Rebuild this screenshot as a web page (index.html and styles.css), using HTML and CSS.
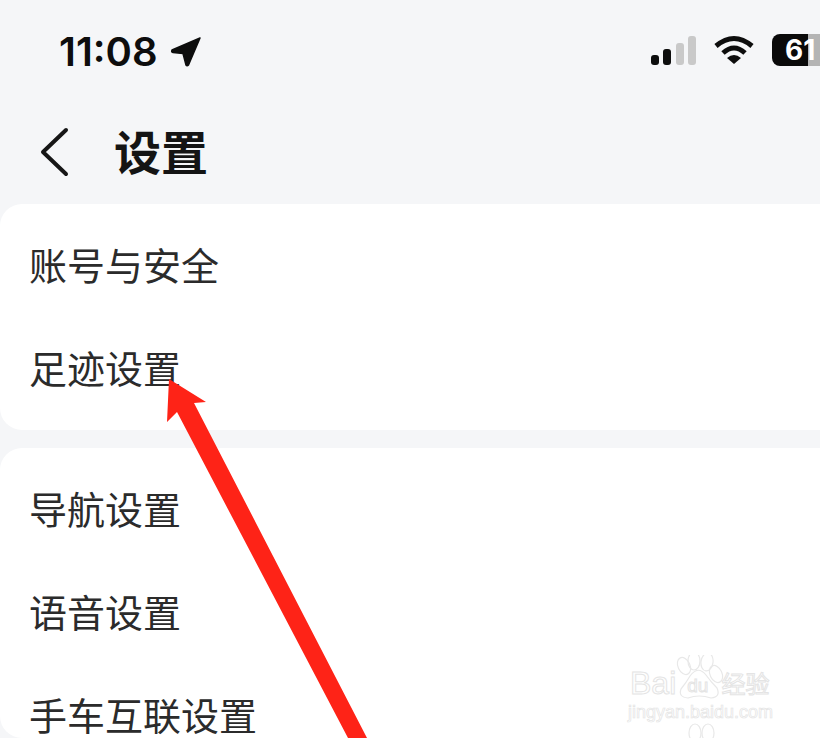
FILE: index.html
```html
<!DOCTYPE html>
<html lang="zh-CN">
<head>
    <meta charset="UTF-8" />
    <title>设置</title>
    <link rel="stylesheet" href="styles.css">
</head>
<body>
    <div class="status-bar">
        <div class="status-time">
            <span>11:08</span>
            <svg class="location-icon" width="32" height="32" viewBox="0 0 32 32">
                <path d="M30 2 L2 14 Q1 16 3 16.5 L13 17.5 L16 29 Q17 30.5 18.5 29 Z" fill="#0d0d0d" stroke="#0d0d0d" stroke-width="1.5" stroke-linejoin="round"/>
            </svg>
        </div>
        <div class="status-icons">
            <div class="signal">
                <span class="bar bar-1"></span>
                <span class="bar bar-2"></span>
                <span class="bar bar-3"></span>
                <span class="bar bar-4"></span>
            </div>
            <svg class="wifi-icon" width="42" height="30" viewBox="0 0 42 30">
                <path d="M3 11 Q21 -4 39 11" fill="none" stroke="#0d0d0d" stroke-width="5"/>
                <path d="M10 18 Q21 8 32 18" fill="none" stroke="#0d0d0d" stroke-width="5"/>
                <path d="M14 23 Q21 17 28 23 L21 29 Z" fill="#0d0d0d"/>
            </svg>
            <div class="battery">61</div>
        </div>
    </div>

    <header class="nav">
        <svg class="back-icon" width="30" height="50" viewBox="0 0 30 50">
            <path d="M26 3 L3 25 L26 47" fill="none" stroke="#161616" stroke-width="4" stroke-linecap="round" stroke-linejoin="round"/>
        </svg>
        <h1 class="nav-title">设置</h1>
    </header>

    <section class="card card-first">
        <div class="row">账号与安全</div>
        <div class="row">足迹设置</div>
    </section>
    <section class="card card-last">
        <div class="row">导航设置</div>
        <div class="row">语音设置</div>
        <div class="row">手车互联设置</div>
    </section>

    <!-- red arrow drawn on top of the screenshot -->
    <svg class="arrow" width="820" height="738" viewBox="0 0 820 738">
        <polygon points="169,379 206,402 194,403 367,738 348,738 177,412 167,422" fill="#fe2317"/>
    </svg>

    <div class="watermark">
        <svg class="paw" width="150" height="83" viewBox="0 0 150 83">
            <g fill="none" stroke="#e8e8e8" stroke-width="1.2">
                <ellipse cx="56" cy="11" rx="6" ry="9" transform="rotate(-25 56 11)"/>
                <ellipse cx="66" cy="6" rx="6" ry="9"/>
                <ellipse cx="79" cy="7" rx="6" ry="9" transform="rotate(8 79 7)"/>
                <ellipse cx="88" cy="19" rx="6" ry="9" transform="rotate(-25 88 19)"/>
                <path d="M53 34 Q58 28 62 21 Q70 10 78 20 Q83 27 89 33 Q93 42 83 43 Q71 39 60 43 Q50 42 53 34 Z"/>
                <ellipse cx="67" cy="78" rx="6" ry="9"/>
                <ellipse cx="80" cy="78" rx="6" ry="9"/>
            </g>
        </svg>
        <div class="wm-logo">
            <span class="wm-bai">Bai</span>
            <span class="wm-du">du</span>
            <span class="wm-cn">经验</span>
        </div>
        <div class="wm-url">jingyan.baidu.com</div>
    </div>
</body>
</html>
```

FILE: styles.css
```css
html, body {
    margin: 0;
    padding: 0;
    width: 820px;
    height: 738px;
    overflow: hidden;
}
body {
    position: relative;
    background: #f5f6f8;
    color: #222;
    font-family: "Noto Sans CJK SC", "Liberation Sans", sans-serif;
}
.status-bar {
    display: flex;
    justify-content: space-between;
    align-items: center;
    height: 50px;
    padding: 27px 0 0 59px;
}
.status-time {
    display: flex;
    align-items: center;
    gap: 12px;
    font-family: Inter, "Liberation Sans", sans-serif;
    font-size: 40px;
    font-weight: 600;
    line-height: 50px;
    color: #0d0d0d;
}
.status-icons {
    display: flex;
    align-items: center;
    gap: 17px;
    margin-top: -4px;
}
.signal {
    display: flex;
    align-items: flex-end;
    gap: 4.5px;
    height: 30px;
}
.bar {
    width: 8px;
    border-radius: 3px;
    background: #0d0d0d;
}
.bar-1 { height: 10px; }
.bar-2 { height: 16px; }
.bar-3 { height: 22px; background: #c9c9c9; }
.bar-4 { height: 29px; background: #c9c9c9; }
.battery {
    width: 35px;
    height: 32px;
    padding-left: 13px;
    border-radius: 8px 0 0 8px;
    background: linear-gradient(to right, #0a0a0a 36px, #b4b4b4 36px);
    font-family: Inter, "Liberation Sans", sans-serif;
    font-size: 28px;
    font-weight: 700;
    line-height: 32px;
    color: #fff;
    white-space: nowrap;
}
.nav {
    display: flex;
    align-items: center;
    gap: 44px;
    height: 50px;
    margin-top: 48px;
    padding-left: 40px;
}
.nav-title {
    margin: 0;
    font-size: 47px;
    font-weight: 700;
    line-height: 50px;
    color: #141414;
}
.back-icon {
    margin-top: 4px;
}
.card {
    display: flex;
    flex-direction: column;
    gap: 59px;
    background: #fff;
    border-radius: 22px 0 0 22px;
    padding: 38px 0 41px;
}
.card-first {
    margin-top: 29px;
    margin-bottom: 18px;
}
.card-last {
    padding-bottom: 2px;
}
.row {
    height: 44px;
    line-height: 44px;
    padding-left: 29px;
    font-size: 38px;
    color: #2b2b2b;
}
.arrow {
    position: absolute;
    left: 0;
    top: 0;
}
.watermark {
    position: absolute;
    left: 628px;
    top: 655px;
    width: 150px;
    height: 83px;
    color: #fff;
}
.paw {
    position: absolute;
    left: 0;
    top: 0;
}
.wm-logo {
    position: absolute;
    left: 2px;
    top: 15px;
    display: flex;
    align-items: center;
    height: 26px;
    font-family: "Liberation Sans", sans-serif;
    white-space: nowrap;
    -webkit-text-stroke: 1px #e4e4e4;
}
.wm-bai {
    font-size: 32px;
    line-height: 26px;
}
.wm-du {
    margin: 5px 0 0 11px;
    font-size: 19px;
    line-height: 18px;
}
.wm-cn {
    margin-left: 13px;
    font-family: "Noto Sans CJK SC", sans-serif;
    font-size: 24px;
    line-height: 26px;
}
.wm-url {
    position: absolute;
    left: 0;
    top: 48px;
    font-family: "Liberation Sans", sans-serif;
    font-size: 18px;
    line-height: 18px;
    white-space: nowrap;
    -webkit-text-stroke: 0.7px #e4e4e4;
}
```
